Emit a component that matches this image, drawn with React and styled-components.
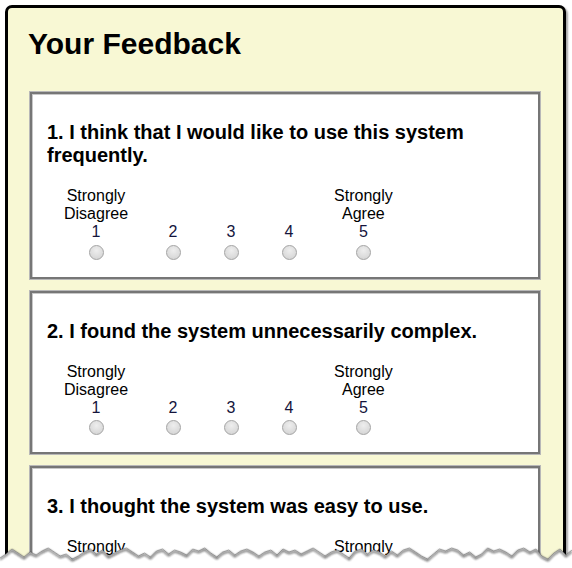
import React from "react";
import styled, { createGlobalStyle } from "styled-components";

const Global = createGlobalStyle`
  html, body { margin: 0; padding: 0; background: #fff; }
  body { width: 572px; height: 568px; overflow: hidden; font-family: "Liberation Sans", Arial, sans-serif; color: #000; }
  #root { position: relative; width: 572px; height: 568px; overflow: hidden; }
`;

const Page = styled.div`
  padding: 5px 6px 0 5px;
`;

const Panel = styled.div`
  background: #f8f8d4;
  border: 3px solid #000;
  border-radius: 7px;
  box-shadow: 2px 2px 2px rgba(0, 0, 0, 0.35);
  padding: 19px 23px 40px 20px;
  min-height: 700px;
`;

const Title = styled.h1`
  margin: 0 0 31px 0;
  font-size: 30px;
  line-height: 34px;
  font-weight: bold;
`;

const Cards = styled.div`
  display: flex;
  flex-direction: column;
  gap: 12px;
  margin-left: 2px;
`;

const Card = styled.div`
  background: #fff;
  border: 2px solid #767676;
  box-shadow: 0 0 0 1px #b8b8b8, inset 1px 1px 0 #c8c8c8;
  padding: 27px 15px 17px 15px;
`;

const Question = styled.h3`
  margin: 0 0 20px 0;
  font-size: 20px;
  line-height: 23px;
  font-weight: bold;
`;

const Scale = styled.div`
  display: flex;
  align-items: flex-end;
  margin-left: 1px;
`;

const Cell = styled.div`
  display: flex;
  flex-direction: column;
  align-items: center;
  min-width: 58px;
  padding: 0 16px;
  box-sizing: border-box;
  font-size: 16px;
  line-height: 18px;
  text-align: center;
`;

const Label = styled.div`
  height: 36px;
  white-space: pre-line;
`;

const Num = styled.div`
  color: #14143c;
`;

const Radio = styled.span`
  display: block;
  width: 15px;
  height: 15px;
  margin-top: 3.5px;
  border-radius: 50%;
  box-sizing: border-box;
  border: 1px solid #a4a4a4;
  background: radial-gradient(circle at 50% 35%, #eeeeee 0%, #dcdcdc 60%, #cfcfcf 100%);
`;

const Tear = styled.svg`
  position: absolute;
  left: 0;
  bottom: 0;
  width: 572px;
  height: 40px;
`;

const questions = [
  "1. I think that I would like to use this system frequently.",
  "2. I found the system unnecessarily complex.",
  "3. I thought the system was easy to use.",
];

const scale = [
  { label: "Strongly\nDisagree", n: 1 },
  { label: "", n: 2 },
  { label: "", n: 3 },
  { label: "", n: 4 },
  { label: "Strongly\nAgree", n: 5 },
];

const offsets = [
  30, 26, 21, 25, 29, 24, 27, 23, 20, 24, 28, 26, 31, 28, 24, 21, 26, 22, 28, 25,
  22, 20, 24, 28, 25, 29, 23, 21, 26, 22, 24, 27, 21, 23, 20, 25, 29, 24, 22, 27,
  23, 21, 24, 28, 24, 22, 27, 21, 24, 22, 26, 23, 20, 24, 28, 24, 22, 26, 30, 23,
  21, 26, 22, 24, 28, 23, 27, 22, 20, 24, 28, 31, 26, 21, 23, 20, 22, 27, 24, 29,
  26, 20, 23, 21, 24, 28, 22, 20, 24, 21, 28, 31, 25, 21, 27, 22,
];

function tearPoints() {
  const pts = [];
  const step = 572 / (offsets.length - 1);
  offsets.forEach((o, i) => {
    pts.push(`${(i * step).toFixed(1)},${o}`);
  });
  return pts;
}

export default function App() {
  const pts = tearPoints();
  const line = pts.join(" ");
  const poly = `0,40 ${line} 572,40`;
  return (
    <>
      <Global />
      <Page>
        <Panel>
          <Title>Your Feedback</Title>
          <Cards>
            {questions.map((q) => (
              <Card key={q}>
                <Question>{q}</Question>
                <Scale>
                  {scale.map((s) => (
                    <Cell key={s.n}>
                      <Label>{s.label}</Label>
                      <Num>{s.n}</Num>
                      <Radio />
                    </Cell>
                  ))}
                </Scale>
              </Card>
            ))}
          </Cards>
        </Panel>
      </Page>
      <Tear viewBox="0 0 572 40">
        <defs>
          <filter id="blur" x="-5%" y="-50%" width="110%" height="200%">
            <feGaussianBlur stdDeviation="0.8" />
          </filter>
        </defs>
        <polygon points={poly} fill="#fff" />
        <polyline
          points={line}
          fill="none"
          stroke="#222"
          strokeWidth="1.5"
          opacity="0.8"
          transform="translate(0,1.5)"
          filter="url(#blur)"
        />
        <polyline points={line} fill="none" stroke="#666" strokeWidth="0.7" opacity="0.7" />
      </Tear>
    </>
  );
}
